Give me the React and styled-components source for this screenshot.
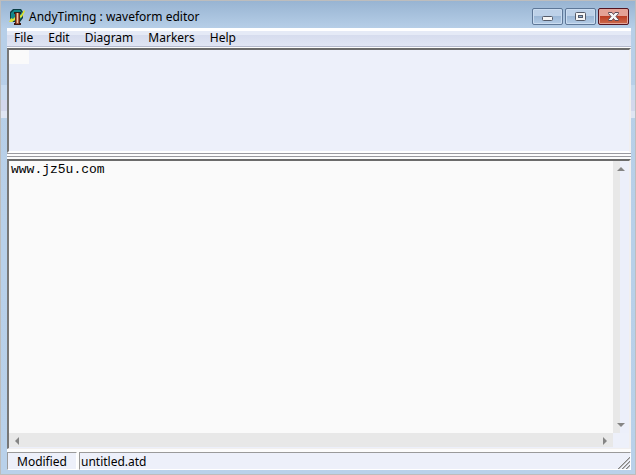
import { useState } from "react";
import styled, { createGlobalStyle } from "styled-components";

const menus = ["File", "Edit", "Diagram", "Markers", "Help"];

function AppIcon() {
  return (
    <svg width="16" height="16" viewBox="0 0 16 16" aria-hidden="true">
      <path d="M4 0h8l2 3v6l-3 4H4L1 10V3z" fill="#0b3d45" />
      <path d="M5 1h6l2 3v4l-3 4H5L2 9V4z" fill="#14868a" />
      <path d="M0 13l2-4 2 1 2-2v3l-3 2zM10 7l2-1 3-5 1 1-3 6-2 1-1 2z" fill="#dbe435" />
      <path d="M5 3h7v2H5z" fill="#2f1d18" />
      <path d="M6 4h5v11H6z" fill="#5a2a1c" />
      <path d="M7 4h3v10H7z" fill="#b46444" />
      <path d="M8 4h1v10H8z" fill="#f0c8ac" />
      <path d="M5 14h7v2H5z" fill="#3a1812" />
      <path d="M7 14h3v1H7z" fill="#a04a30" />
    </svg>
  );
}

function App() {
  const [text, setText] = useState("www.jz5u.com");

  return (
    <Window>
      <Global />
      <TitleBar>
        <AppIcon />
        <Title>AndyTiming : waveform editor</Title>
        <Controls>
          <Control aria-label="Minimize">
            <svg width="29" height="15" viewBox="0 0 29 15">
              <rect x="9.5" y="7.5" width="10" height="4" rx="1" fill="#f5f5f5" stroke="#555b69" />
            </svg>
          </Control>
          <Control aria-label="Maximize">
            <svg width="29" height="15" viewBox="0 0 29 15">
              <rect x="9.5" y="3.5" width="10" height="8" rx="1" fill="#f5f5f5" stroke="#555b69" />
              <rect x="12.5" y="6.5" width="4" height="2" fill="#8faed2" stroke="#555b69" />
            </svg>
          </Control>
          <Control aria-label="Close" $close>
            <svg width="29" height="15" viewBox="0 0 29 15">
              <path
                d="M9.5 3.5h3.500l1.500 2 1.500-2h3.500v1l-2.500 3 2.500 3v1h-3.500l-1.500-2-1.500 2h-3.500v-1l2.500-3-2.500-3z"
                fill="#f5f5f5"
                stroke="#5c4a56"
              />
            </svg>
          </Control>
        </Controls>
      </TitleBar>
      <Client>
        <MenuBar>
          {menus.map((name) => (
            <MenuItem key={name}>{name}</MenuItem>
          ))}
        </MenuBar>
        <WavePane>
          <Cell />
        </WavePane>
        <Splitter />
        <TextPane>
          <Editor
            aria-label="Source"
            spellCheck={false}
            value={text}
            onChange={(e) => setText(e.target.value)}
          />
          <VScroll>
            <Arrow aria-label="Scroll up">
              <svg width="8" height="4" viewBox="0 0 8 4">
                <path d="M0 4l4-4 4 4z" fill="#858585" />
              </svg>
            </Arrow>
            <Arrow aria-label="Scroll down">
              <svg width="8" height="4" viewBox="0 0 8 4">
                <path d="M0 0l4 4 4-4z" fill="#858585" />
              </svg>
            </Arrow>
          </VScroll>
          <HScroll>
            <Arrow aria-label="Scroll left">
              <svg width="4" height="8" viewBox="0 0 4 8">
                <path d="M4 0l-4 4 4 4z" fill="#858585" />
              </svg>
            </Arrow>
            <Arrow aria-label="Scroll right">
              <svg width="4" height="8" viewBox="0 0 4 8">
                <path d="M0 0l4 4-4 4z" fill="#858585" />
              </svg>
            </Arrow>
          </HScroll>
          <Corner />
        </TextPane>
        <StatusBar>
          <Status $center>Modified</Status>
          <Status>
            untitled.atd
            <Grip width="12" height="12" viewBox="0 0 12 12" aria-hidden="true">
              <path d="M0 12L12 0M4 12l8-8M8 12l4-4" stroke="#858585" />
              <path d="M1 12L12 1M5 12l7-7M9 12l3-3" stroke="#b5b5b5" />
            </Grip>
          </Status>
        </StatusBar>
      </Client>
    </Window>
  );
}

export default App;

const Global = createGlobalStyle`
  * {
    box-sizing: border-box;
  }
  body {
    margin: 0;
    font-family: "Noto Sans", sans-serif;
    font-size: 12px;
    color: #000;
  }
  button {
    font: inherit;
    color: inherit;
    border: none;
    padding: 0;
    background: none;
  }
`;
const Window = styled.div`
  display: flex;
  flex-direction: column;
  height: 100vh;
  padding: 0 4px 4px 6px;
  border: 1px solid #bdbdbd;
  background:
    linear-gradient(#c6daef 0 15px, #d3d7ec 15px 26px, #dfe5f3 26px) 0 84px / 100% 33px no-repeat,
    linear-gradient(#98b4d2, #b7cfe8 28px, #b9d1ea);
`;
const TitleBar = styled.header`
  display: flex;
  align-items: center;
  flex: none;
  height: 27px;
  gap: 4px;
  padding: 4px 2px 0;
`;
const Title = styled.h1`
  margin: 0;
  flex: 1;
  font-size: 12px;
  line-height: 18px;
  font-weight: 400;
`;
const Controls = styled.div`
  display: flex;
  gap: 2px;
`;
const Control = styled.button`
  display: flex;
  width: 31px;
  height: 17px;
  border: 1px solid ${(p) => (p.$close ? "#541420" : "#5e7797")};
  border-radius: 2px;
  box-shadow: inset 0 0 0 1px ${(p) => (p.$close ? "#e3a59b" : "#cadcf0")};
  background: ${(p) =>
    p.$close
      ? "linear-gradient(#e4a196 0 7px, #bb3a22 7px, #cc6c4d)"
      : "linear-gradient(#bdd1e8 0 7px, #9ab6d5 7px, #b4cce6)"};
`;
const Client = styled.main`
  display: flex;
  flex-direction: column;
  flex: 1;
  min-height: 0;
  background: #fcfcfc;
`;
const MenuBar = styled.nav`
  display: flex;
  flex: none;
  gap: 1px;
  height: 19px;
  margin-bottom: 1px;
  border-bottom: 1px solid #b4b9cc;
  background: linear-gradient(#fff 0 3px, #e5eaf6 3px 7px, #d6dcee 7px, #e0e5f3);
`;
const MenuItem = styled.button`
  padding: 0 7px;
  line-height: 20px;
`;
const WavePane = styled.section`
  flex: none;
  height: 105px;
  border: solid;
  border-width: 2px;
  border-color: #6b6b6b #f1efef #fff #777;
  background: #edf0fa;
`;
const Cell = styled.div`
  width: 20px;
  height: 14px;
  background: #fafafa;
`;
const Splitter = styled.div`
  flex: none;
  height: 4px;
  margin-bottom: 2px;
  border: solid #9a9aa0;
  border-width: 1px 0;
  cursor: row-resize;
`;
const TextPane = styled.section`
  display: grid;
  grid-template: 1fr 15px / 1fr 16px;
  flex: 1;
  min-height: 0;
  border: solid;
  border-width: 2px 2px 1px 2px;
  border-color: #6b6b6b #f1efef #f1efef #777;
`;
const Editor = styled.textarea`
  width: 100%;
  height: 100%;
  padding: 0 2px;
  border: none;
  outline: none;
  resize: none;
  overflow: hidden;
  background: #fafafa;
  color: #000;
  font: 13px/18px "Liberation Mono", monospace;
`;
const VScroll = styled.div`
  display: flex;
  flex-direction: column;
  justify-content: space-between;
  background: linear-gradient(90deg, #e8e8e8 7px, #eceffa 7px);
`;
const HScroll = styled.div`
  display: flex;
  justify-content: space-between;
  background: linear-gradient(#e8e8e8 14px, #eceffa 14px);
`;
const Arrow = styled.button`
  display: flex;
  align-items: center;
  justify-content: center;
  width: 16px;
  height: 16px;
`;
const Corner = styled.div`
  background: #edf0fa;
`;
const StatusBar = styled.footer`
  display: grid;
  grid-template: 18px / 70px 1fr;
  gap: 2px;
  flex: none;
  margin-top: 3px;
`;
const Status = styled.div`
  display: flex;
  align-items: flex-start;
  justify-content: ${(p) => (p.$center ? "center" : "space-between")};
  padding-left: ${(p) => (p.$center ? 0 : 1)}px;
  border: solid;
  border-width: 1px;
  border-color: #9a9a9a #fff #fff #9a9a9a;
  background: #edf0fa;
  line-height: 18px;
`;
const Grip = styled.svg`
  align-self: flex-end;
`;
